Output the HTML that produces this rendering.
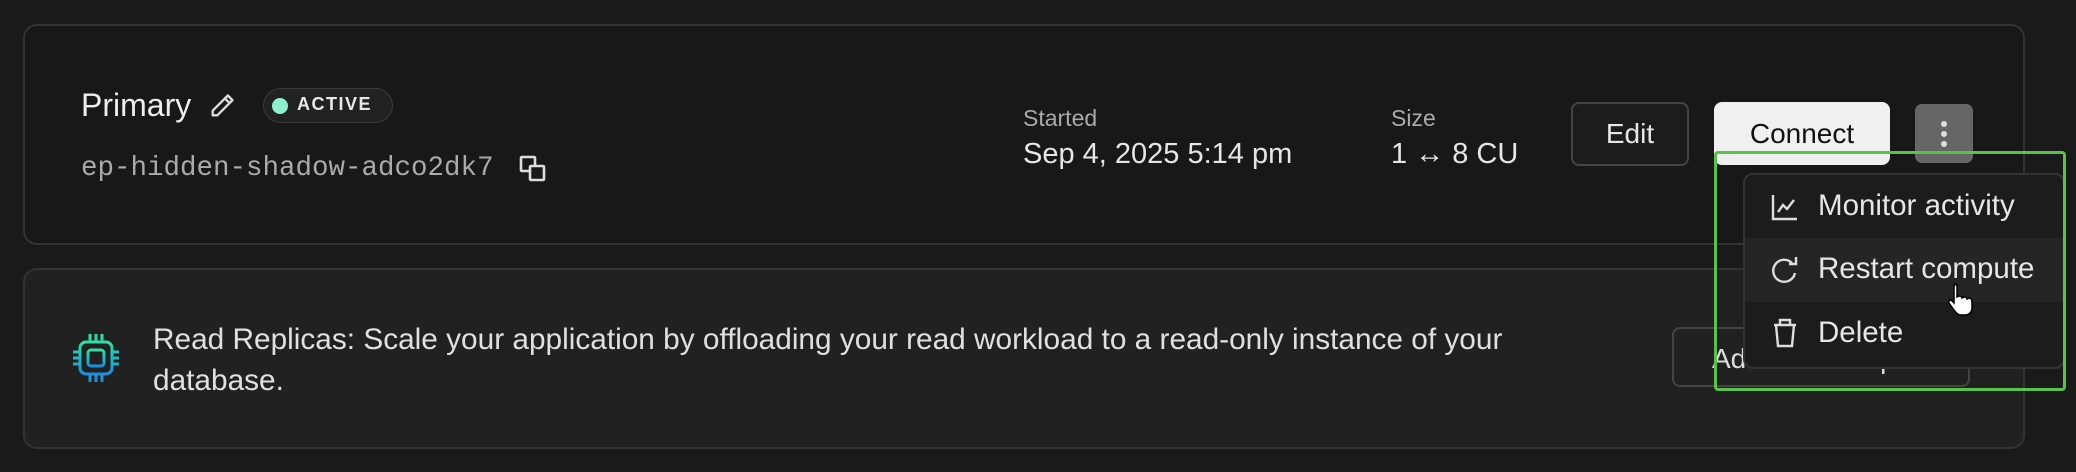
<!DOCTYPE html>
<html><head><style>
body{margin:0;width:2076px;height:472px;background:#1a1a1a;font-family:"Liberation Sans",sans-serif;color:#e6e6e6;position:relative;overflow:hidden}
.a{position:absolute}
.card{position:absolute;left:23px;width:1998px;border:2px solid #333;border-radius:14px}
</style></head><body>
<div class="card" style="top:24px;height:217px;background:#181818"></div>
<div class="card" style="top:268px;height:177px;background:#212121"></div>

<div class="a" style="left:81px;top:87px;font-size:32px;color:#eee">Primary</div>
<svg class="a" style="left:208px;top:92px" width="28" height="28" viewBox="0 0 24 24" fill="none" stroke="#ddd" stroke-width="2" stroke-linejoin="round"><path d="M17 3l4 4L8 20H4v-4z M14.5 5.5l4 4"/></svg>
<div class="a" style="left:263px;top:88px;width:128px;height:33px;border:1.5px solid #3a3a3a;border-radius:18px;background:#222"></div>
<div class="a" style="left:272px;top:98px;width:16px;height:16px;border-radius:50%;background:#8ef0cf"></div>
<div class="a" style="left:297px;top:94px;font-size:18px;font-weight:bold;letter-spacing:1.5px;color:#e8e8e8">ACTIVE</div>
<div class="a" style="left:81px;top:153px;font-family:'Liberation Mono',monospace;font-size:27.5px;color:#aaa">ep-hidden-shadow-adco2dk7</div>
<svg class="a" style="left:519px;top:155px" width="28" height="28" viewBox="0 0 28 28" fill="none" stroke="#ddd" stroke-width="2.6"><rect x="2" y="2" width="14" height="14" rx="1"/><rect x="11" y="11" width="14" height="14" rx="1" fill="#181818"/></svg>

<div class="a" style="left:1023px;top:105px;font-size:23px;color:#aaa">Started</div>
<div class="a" style="left:1023px;top:138px;font-size:29px;color:#e6e6e6">Sep 4, 2025 5:14 pm</div>
<div class="a" style="left:1391px;top:105px;font-size:23px;color:#aaa">Size</div>
<div class="a" style="left:1391px;top:138px;font-size:29px;color:#e6e6e6">1 ↔ 8 CU</div>

<div class="a" style="left:1571px;top:102px;width:114px;height:60px;border:2px solid #444;border-radius:8px;background:#1c1c1c;font-size:28px;text-align:center;line-height:60px">Edit</div>
<div class="a" style="left:1714px;top:102px;width:176px;height:63px;border-radius:8px;background:#f0f0f0;color:#111;font-size:28px;text-align:center;line-height:63px">Connect</div>
<div class="a" style="left:1915px;top:104px;width:58px;height:59px;border-radius:7px;background:#666"></div>
<div class="a" style="left:1941px;top:121px;width:6px;height:6px;border-radius:50%;background:#ddd;box-shadow:0 10px 0 #ddd,0 20px 0 #ddd"></div>

<svg class="a" style="left:72px;top:332px" width="48" height="52" viewBox="0 0 48 52" fill="none" stroke-width="3">
<defs><linearGradient id="g" x1="0" y1="0" x2="0" y2="1"><stop offset="0" stop-color="#2fe0a0"/><stop offset="1" stop-color="#1a8fe0"/></linearGradient></defs>
<g stroke="url(#g)"><rect x="8" y="10" width="32" height="32" rx="6"/><rect x="16" y="18" width="16" height="16" rx="3"/><path d="M18 2v7M24 2v7M30 2v7M18 43v7M24 43v7M30 43v7M1 20h6M1 26h6M1 32h6M41 20h6M41 26h6M41 32h6"/></g></svg>
<div class="a" style="left:153px;top:319px;font-size:29.8px;line-height:41px;color:#e0e0e0">Read Replicas: Scale your application by offloading your read workload to a read-only instance of your<br>database.</div>
<div class="a" style="left:1672px;top:327px;width:298px;height:60px;border:2px solid #444;border-radius:8px;font-size:28px;line-height:60px;padding-left:38px;box-sizing:border-box;color:#ddd">Add Read Replica</div>

<div class="a" style="left:1743px;top:173px;width:318px;height:192px;border:2px solid #333;border-radius:10px;background:#1c1c1c;overflow:hidden">
<div class="a" style="left:0;top:63px;width:318px;height:64px;background:#252525"></div>
</div>
<svg class="a" style="left:1771px;top:193px" width="28" height="28" viewBox="0 0 28 28" fill="none" stroke="#ddd" stroke-width="2.4"><path d="M2 2v24h24M7 19l5-7 4 4 7-9"/></svg>
<div class="a" style="left:1818px;top:189px;font-size:29.5px">Monitor activity</div>
<svg class="a" style="left:1771px;top:255px" width="28" height="30" viewBox="0 0 28 30" fill="none" stroke="#ddd" stroke-width="2.4"><path d="M24 18a11 11 0 1 1-3-10M25 2v7h-7"/></svg>
<div class="a" style="left:1818px;top:252px;font-size:29.5px">Restart compute</div>
<svg class="a" style="left:1772px;top:318px" width="26" height="30" viewBox="0 0 26 30" fill="none" stroke="#ddd" stroke-width="2.4"><path d="M2 7h22M8 7V2h10v5M4 7l2 21h14l2-21"/></svg>
<div class="a" style="left:1818px;top:316px;font-size:29.5px">Delete</div>
<svg class="a" style="left:1948px;top:282px" width="26" height="34" viewBox="0 0 26 34"><path d="M6 2c2 0 3 1 3 3v10l2-1c2 0 3 1 3 2l2-1c2 0 3 1 3 2l2-1c2 0 3 2 3 4v6c0 4-3 7-7 7h-4c-3 0-5-2-7-5l-5-7c-1-2 1-4 3-2l2 2V5c0-2 1-3 3-3z" fill="#fff" stroke="#000" stroke-width="1.5"/></svg>

<div class="a" style="left:1714px;top:151px;width:346px;height:234px;border:3px solid #5bc14a;border-radius:4px"></div>
</body></html>
